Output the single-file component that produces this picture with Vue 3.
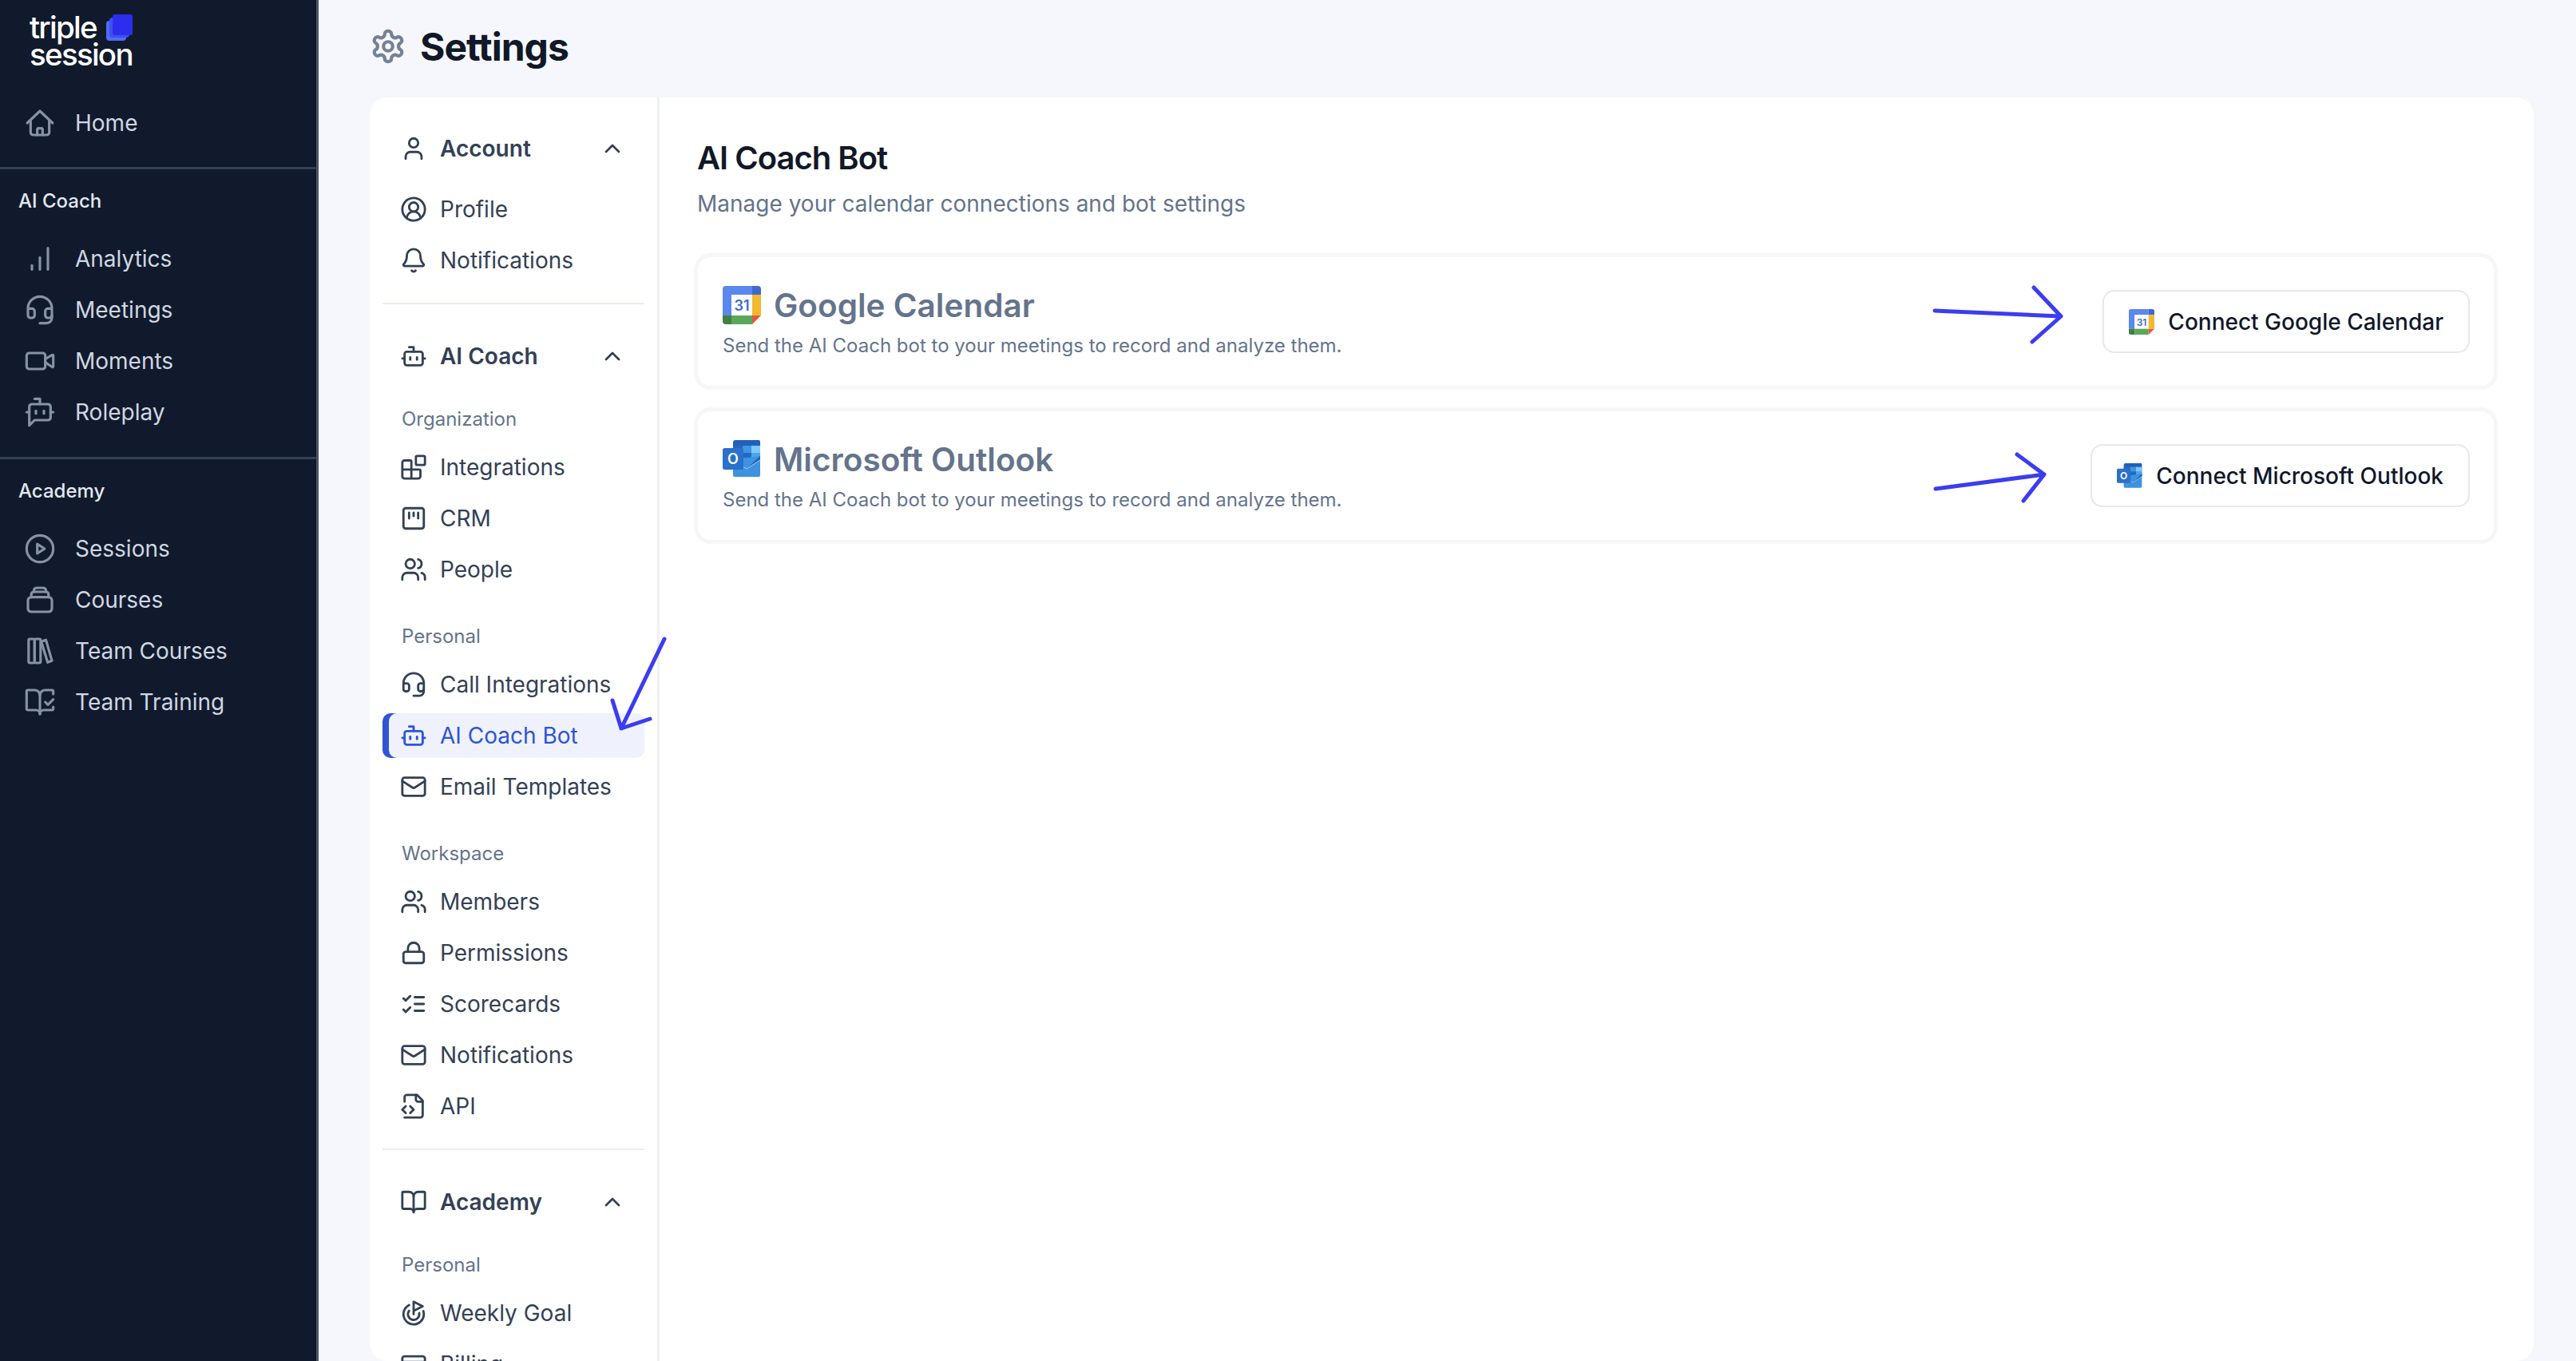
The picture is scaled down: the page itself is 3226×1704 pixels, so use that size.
<template>
  <div class="app-shell">
    <aside class="sidebar">
      <div class="logo">
        <div class="logo-line">
          <span>triple</span>
          <svg class="logo-mark" viewBox="0 0 33 33">
            <rect x="0" y="8" width="25" height="25" rx="4" fill="#4f6cf5" />
            <rect x="4" y="4" width="25" height="25" rx="4" fill="#3d50f2" />
            <rect x="8" y="0" width="25" height="26" rx="3" fill="#2d2df0" />
          </svg>
        </div>
        <div class="logo-line">session</div>
      </div>

      <div class="side-group home-group">
        <a v-for="item in homeNav" :key="item.label" class="side-item">
          <svg class="side-icon" viewBox="0 0 24 24" v-html="icons[item.icon]"></svg>
          <span>{{ item.label }}</span>
        </a>
      </div>

      <div class="side-group coach-group">
        <div class="side-title">AI Coach</div>
        <a v-for="item in coachNav" :key="item.label" class="side-item">
          <svg class="side-icon" viewBox="0 0 24 24" v-html="icons[item.icon]"></svg>
          <span>{{ item.label }}</span>
        </a>
      </div>

      <div class="side-group academy-group">
        <div class="side-title">Academy</div>
        <a v-for="item in academyNav" :key="item.label" class="side-item">
          <svg class="side-icon" viewBox="0 0 24 24" v-html="icons[item.icon]"></svg>
          <span>{{ item.label }}</span>
        </a>
      </div>
    </aside>

    <main class="main">
      <header class="page-header">
        <svg class="gear" viewBox="0 0 24 24" v-html="icons.settings"></svg>
        <h1>Settings</h1>
      </header>

      <div class="panel">
        <nav class="settings-nav">
          <section v-for="group in settingsNav" :key="group.title" class="nav-group">
            <div class="nav-head">
              <svg class="nav-icon" viewBox="0 0 24 24" v-html="icons[group.icon]"></svg>
              <span class="nav-head-label">{{ group.title }}</span>
              <svg class="chevron" viewBox="0 0 24 24" v-html="icons.chevron"></svg>
            </div>
            <div v-for="block in group.blocks" :key="block.label" class="nav-block">
              <div v-if="block.label" class="nav-label">{{ block.label }}</div>
              <div class="nav-items">
                <a
                  v-for="item in block.items"
                  :key="item.label"
                  :class="['nav-item', { active: item.active }]"
                >
                  <svg class="nav-icon" viewBox="0 0 24 24" v-html="icons[item.icon]"></svg>
                  <span>{{ item.label }}</span>
                </a>
              </div>
            </div>
          </section>
        </nav>

        <div class="content">
          <h2>AI Coach Bot</h2>
          <p class="content-desc">Manage your calendar connections and bot settings</p>

          <div class="cards">
            <div class="card">
              <div class="card-info">
                <div class="card-title">
                  <svg class="brand" viewBox="0 0 48 48" v-html="googleLogo"></svg>
                  <span>Google Calendar</span>
                </div>
                <p class="card-desc">Send the AI Coach bot to your meetings to record and analyze them.</p>
              </div>
              <button class="connect">
                <svg class="brand-small" viewBox="0 0 48 48" v-html="googleLogo"></svg>
                Connect Google Calendar
              </button>
            </div>

            <div class="card">
              <div class="card-info">
                <div class="card-title">
                  <svg class="brand" viewBox="0 0 48 48" v-html="outlookLogo"></svg>
                  <span>Microsoft Outlook</span>
                </div>
                <p class="card-desc">Send the AI Coach bot to your meetings to record and analyze them.</p>
              </div>
              <button class="connect">
                <svg class="brand-small" viewBox="0 0 48 48" v-html="outlookLogo"></svg>
                Connect Microsoft Outlook
              </button>
            </div>
          </div>
        </div>
      </div>
    </main>

    <!-- hand drawn arrows on top of the page -->
    <svg class="scribbles" viewBox="0 0 3226 1704">
      <path d="M2423 389 2581 396M2547 360 2581 396 2545 428" />
      <path d="M2424 612 2560 594M2526 569 2560 594 2534 627" />
      <path d="M832 800 778 912M767 877 778 912 814 900" />
    </svg>
  </div>
</template>

<script setup>
const icons = {
  home: '<path d="M2.5 12 12 3l9.5 9"/><path d="M5 10v9a2 2 0 0 0 2 2h10a2 2 0 0 0 2-2v-9"/><path d="M10 21v-4a1 1 0 0 1 1-1h2a1 1 0 0 1 1 1v4"/>',
  chart: '<path d="M6 20v-3"/><path d="M12 20v-9"/><path d="M18 20V4"/>',
  headset: '<path d="M3 11h3a2 2 0 0 1 2 2v3a2 2 0 0 1-2 2H5a2 2 0 0 1-2-2v-5Zm0 0a9 9 0 1 1 18 0m0 0v5a2 2 0 0 1-2 2h-1a2 2 0 0 1-2-2v-3a2 2 0 0 1 2-2h3Z"/><path d="M21 16v2a4 4 0 0 1-4 4h-5"/>',
  video: '<path d="m16 13 5.223 3.482a.5.5 0 0 0 .777-.416V7.87a.5.5 0 0 0-.752-.432L16 10.5"/><rect x="2" y="6" width="14" height="12" rx="2"/>',
  botMessage: '<path d="M12 6V2H8"/><path d="m8 18-4 4V8a2 2 0 0 1 2-2h12a2 2 0 0 1 2 2v8a2 2 0 0 1-2 2Z"/><path d="M2 12h2"/><path d="M9 11v2"/><path d="M15 11v2"/><path d="M20 12h2"/>',
  play: '<circle cx="12" cy="12" r="10"/><path d="M10 8.5v7l5.5-3.5z"/>',
  courses: '<rect x="3" y="10" width="18" height="11" rx="2.5"/><path d="M5.5 10V8a2 2 0 0 1 2-2h9a2 2 0 0 1 2 2v2"/><path d="M7.5 6V5a2 2 0 0 1 2-2h5a2 2 0 0 1 2 2v1"/>',
  books: '<rect x="3.5" y="3" width="4.5" height="18" rx="1"/><rect x="8" y="3" width="4.5" height="18" rx="1"/><path d="M13 5 16.5 3.7 21 19.3 17.8 20.6z"/>',
  bookCheck: '<path d="M12 21V7"/><path d="m16 12 2 2 4-4"/><path d="M22 6V4a1 1 0 0 0-1-1h-5a4 4 0 0 0-4 4 4 4 0 0 0-4-4H3a1 1 0 0 0-1 1v13a1 1 0 0 0 1 1h6a3 3 0 0 1 3 3 3 3 0 0 1 3-3h6a1 1 0 0 0 1-1v-1.3"/>',
  settings: '<path d="M12.22 2h-.44a2 2 0 0 0-2 2v.18a2 2 0 0 1-1 1.73l-.43.25a2 2 0 0 1-2 0l-.15-.08a2 2 0 0 0-2.73.73l-.22.38a2 2 0 0 0 .73 2.73l.15.1a2 2 0 0 1 1 1.72v.51a2 2 0 0 1-1 1.74l-.15.09a2 2 0 0 0-.73 2.73l.22.38a2 2 0 0 0 2.73.73l.15-.08a2 2 0 0 1 2 0l.43.25a2 2 0 0 1 1 1.73V20a2 2 0 0 0 2 2h.44a2 2 0 0 0 2-2v-.18a2 2 0 0 1 1-1.73l.43-.25a2 2 0 0 1 2 0l.15.08a2 2 0 0 0 2.73-.73l.22-.39a2 2 0 0 0-.73-2.73l-.15-.08a2 2 0 0 1-1-1.74v-.5a2 2 0 0 1 1-1.74l.15-.09a2 2 0 0 0 .73-2.73l-.22-.38a2 2 0 0 0-2.73-.73l-.15.08a2 2 0 0 1-2 0l-.43-.25a2 2 0 0 1-1-1.73V4a2 2 0 0 0-2-2z"/><circle cx="12" cy="12" r="3"/>',
  chevron: '<path d="m18 15-6-6-6 6"/>',
  user: '<path d="M19 21v-2a4 4 0 0 0-4-4H9a4 4 0 0 0-4 4v2"/><circle cx="12" cy="7" r="4"/>',
  profile: '<circle cx="12" cy="12" r="10"/><circle cx="12" cy="10" r="4"/><path d="M18 20a6 6 0 0 0-12 0"/>',
  bell: '<path d="M10.268 21a2 2 0 0 0 3.464 0"/><path d="M3.262 15.326A1 1 0 0 0 4 17h16a1 1 0 0 0 .74-1.673C19.41 13.956 18 12.499 18 8A6 6 0 0 0 6 8c0 4.499-1.411 5.956-2.738 7.326"/>',
  bot: '<path d="M12 8V4H8"/><rect x="4" y="8" width="16" height="12" rx="2"/><path d="M2 14h2"/><path d="M20 14h2"/><path d="M15 13v2"/><path d="M9 13v2"/>',
  blocks: '<path d="M10 22V7a1 1 0 0 0-1-1H4a2 2 0 0 0-2 2v12a2 2 0 0 0 2 2h12a2 2 0 0 0 2-2v-5a1 1 0 0 0-1-1H2"/><rect x="14" y="2" width="8" height="8" rx="1"/>',
  kanban: '<rect x="3" y="3" width="18" height="18" rx="2"/><path d="M8 7v5"/><path d="M12 7v3"/><path d="M16 7v5"/>',
  users: '<path d="M16 21v-2a4 4 0 0 0-4-4H6a4 4 0 0 0-4 4v2"/><circle cx="9" cy="7" r="4"/><path d="M22 21v-2a4 4 0 0 0-3-3.87"/><path d="M16 3.13a4 4 0 0 1 0 7.75"/>',
  mail: '<rect x="2" y="4" width="20" height="16" rx="2"/><path d="m22 7-8.97 5.7a1.94 1.94 0 0 1-2.06 0L2 7"/>',
  lock: '<rect x="3" y="11" width="18" height="10" rx="2"/><path d="M7 11V8a5 5 0 0 1 10 0v3"/>',
  checks: '<path d="m3 17 2 2 4-4"/><path d="m3 7 2 2 4-4"/><path d="M13 6h8"/><path d="M13 12h8"/><path d="M13 18h8"/>',
  fileCode: '<path d="M4 22h14a2 2 0 0 0 2-2V7l-5-5H6a2 2 0 0 0-2 2v4"/><path d="M14 2v4a2 2 0 0 0 2 2h4"/><path d="m5 12-3 3 3 3"/><path d="m9 18 3-3-3-3"/>',
  book: '<path d="M12 7v14"/><path d="M3 18a1 1 0 0 1-1-1V4a1 1 0 0 1 1-1h5a4 4 0 0 1 4 4 4 4 0 0 1 4-4h5a1 1 0 0 1 1 1v13a1 1 0 0 1-1 1h-6a3 3 0 0 0-3 3 3 3 0 0 0-3-3z"/>',
  goal: '<path d="M12 13V2l8 4-8 4"/><path d="M20.561 10.222a9 9 0 1 1-12.55-5.29"/><path d="M8.002 9.997a5 5 0 1 0 8.9 2.02"/>',
  card: '<rect x="2" y="5" width="20" height="14" rx="2"/><path d="M2 10h20"/>'
}

const googleLogo = `
  <path d="M4 0H37V11H11V37H0V4a4 4 0 0 1 4-4Z" fill="#5a88ec"/>
  <path d="M37 0h7a4 4 0 0 1 4 4v7H37Z" fill="#3f68cf"/>
  <rect x="11" y="11" width="26" height="26" fill="#fff"/>
  <rect x="37" y="11" width="11" height="26" fill="#f1b92e"/>
  <rect x="11" y="37" width="26" height="11" fill="#5aa75c"/>
  <path d="M0 37H11V48H4a4 4 0 0 1-4-4Z" fill="#3f7f42"/>
  <path d="M37 37H48L37 48Z" fill="#e4593c"/>
  <text x="24" y="31" text-anchor="middle" font-family="Inter, sans-serif" font-size="18" font-weight="600" fill="#3f68cf">31</text>
`

const outlookLogo = `
  <path d="M16 0H45a2 2 0 0 1 2 2V24H13V3a3 3 0 0 1 3-3Z" fill="#2160b8"/>
  <rect x="13" y="7" width="12" height="9" fill="#2568c4"/>
  <rect x="25" y="7" width="11" height="9" fill="#3f95e6"/>
  <rect x="36" y="7" width="11" height="9" fill="#7cc8fa"/>
  <rect x="25" y="16" width="11" height="9" fill="#2568c4"/>
  <rect x="36" y="16" width="11" height="9" fill="#4aa6ee"/>
  <path d="M13 24 47 20V44a2 2 0 0 1-2 2H15a2 2 0 0 1-2-2Z" fill="#3e93e0"/>
  <path d="M13 25 30 36 47 20V24L30 36Z" fill="#1f5db3"/>
  <path d="M13 26 30 36 47 25" fill="none" stroke="#bcdcf7" stroke-width=".8"/>
  <rect x="0" y="10" width="26" height="27" rx="2.5" fill="#2a70cc"/>
  <text x="13" y="30" text-anchor="middle" font-family="Inter, sans-serif" font-size="18" font-weight="600" fill="#fff">O</text>
`

const homeNav = [{ label: 'Home', icon: 'home' }]

const coachNav = [
  { label: 'Analytics', icon: 'chart' },
  { label: 'Meetings', icon: 'headset' },
  { label: 'Moments', icon: 'video' },
  { label: 'Roleplay', icon: 'botMessage' }
]

const academyNav = [
  { label: 'Sessions', icon: 'play' },
  { label: 'Courses', icon: 'courses' },
  { label: 'Team Courses', icon: 'books' },
  { label: 'Team Training', icon: 'bookCheck' }
]

const settingsNav = [
  {
    title: 'Account',
    icon: 'user',
    blocks: [
      {
        label: '',
        items: [
          { label: 'Profile', icon: 'profile' },
          { label: 'Notifications', icon: 'bell' }
        ]
      }
    ]
  },
  {
    title: 'AI Coach',
    icon: 'bot',
    blocks: [
      {
        label: 'Organization',
        items: [
          { label: 'Integrations', icon: 'blocks' },
          { label: 'CRM', icon: 'kanban' },
          { label: 'People', icon: 'users' }
        ]
      },
      {
        label: 'Personal',
        items: [
          { label: 'Call Integrations', icon: 'headset' },
          { label: 'AI Coach Bot', icon: 'bot', active: true },
          { label: 'Email Templates', icon: 'mail' }
        ]
      },
      {
        label: 'Workspace',
        items: [
          { label: 'Members', icon: 'users' },
          { label: 'Permissions', icon: 'lock' },
          { label: 'Scorecards', icon: 'checks' },
          { label: 'Notifications', icon: 'mail' },
          { label: 'API', icon: 'fileCode' }
        ]
      }
    ]
  },
  {
    title: 'Academy',
    icon: 'book',
    blocks: [
      {
        label: 'Personal',
        items: [
          { label: 'Weekly Goal', icon: 'goal' },
          { label: 'Billing', icon: 'card' }
        ]
      }
    ]
  }
]
</script>

<style scoped>
.app-shell {
  position: relative;
  display: flex;
  width: 3226px;
  height: 1704px;
  overflow: hidden;
  background: #f5f7fc;
  font-family: 'Inter', sans-serif;
  color: #0f172a;
}

.sidebar {
  width: 399px;
  flex-shrink: 0;
  background: #111a2c;
  border-right: 3px solid #465265;
  box-sizing: border-box;
}

.logo {
  height: 122px;
  padding: 17px 0 0 37px;
  box-sizing: border-box;
  color: #fff;
  font-size: 38.5px;
  font-weight: 500;
  letter-spacing: -0.045em;
  line-height: 34px;
}

.logo-line {
  display: flex;
  align-items: flex-start;
  gap: 12px;
  height: 34px;
}

.logo-mark {
  width: 33px;
  height: 33px;
  flex-shrink: 0;
  margin-top: 1px;
}

.side-group {
  border-bottom: 3px solid #334155;
  box-sizing: border-box;
}

.home-group {
  height: 90px;
}

.coach-group {
  padding-top: 19px;
  height: 363px;
}

.academy-group {
  padding-top: 19px;
  border-bottom: none;
}

.side-title {
  height: 40px;
  margin-bottom: 21px;
  padding-left: 23px;
  display: flex;
  align-items: center;
  color: #e2e8f0;
  font-size: 24px;
  font-weight: 500;
}

.side-item {
  height: 64px;
  padding-left: 30px;
  display: flex;
  align-items: center;
  gap: 24px;
  color: #cfd7e3;
  font-size: 28px;
}

.side-icon {
  width: 40px;
  height: 40px;
  flex-shrink: 0;
  fill: none;
  stroke: #8692a6;
  stroke-width: 1.9;
  stroke-linecap: round;
  stroke-linejoin: round;
}

.main {
  flex: 1;
  min-width: 0;
  padding: 0 53px 0 64px;
  display: flex;
  flex-direction: column;
}

.page-header {
  height: 122px;
  flex-shrink: 0;
  display: flex;
  align-items: center;
  gap: 17px;
  padding-bottom: 6px;
  box-sizing: border-box;
}

.gear {
  width: 46px;
  height: 46px;
  fill: none;
  stroke: #768294;
  stroke-width: 2.2;
  stroke-linecap: round;
  stroke-linejoin: round;
}

h1 {
  margin: 0;
  font-size: 48px;
  font-weight: 700;
  letter-spacing: -0.02em;
  color: #111827;
}

.panel {
  flex: 1;
  min-height: 0;
  display: flex;
  background: #fff;
  border-radius: 22px;
  overflow: hidden;
}

.settings-nav {
  width: 363px;
  flex-shrink: 0;
  padding: 36px 16px 0;
  box-sizing: border-box;
  border-right: 3px solid #eef0f4;
}

.nav-group {
  padding-bottom: 25px;
  margin-bottom: 37px;
  border-bottom: 2px solid #e9ecf1;
}

.nav-group:last-child {
  border-bottom: none;
}

.nav-head {
  height: 56px;
  padding: 0 24px 0 22px;
  display: flex;
  align-items: center;
  gap: 16px;
  color: #334155;
  font-size: 28px;
  font-weight: 600;
  margin-bottom: 20px;
}

.nav-head-label {
  flex: 1;
}

.chevron {
  width: 32px;
  height: 32px;
  fill: none;
  stroke: #334155;
  stroke-width: 2;
  stroke-linecap: round;
  stroke-linejoin: round;
}

.nav-label {
  height: 40px;
  padding-left: 24px;
  display: flex;
  align-items: center;
  margin-top: 30px;
  margin-bottom: 13px;
  color: #64748b;
  font-size: 24px;
}

.nav-block + .nav-block {
  margin-top: 35px;
}

.nav-items {
  display: flex;
  flex-direction: column;
  gap: 8px;
}

.nav-item {
  height: 56px;
  padding-left: 22px;
  display: flex;
  align-items: center;
  gap: 16px;
  border-radius: 10px;
  color: #334155;
  font-size: 28px;
}

.nav-item.active {
  background: #eff2fd;
  box-shadow: inset 8px 0 0 #2f55d4;
  color: #2f55d4;
}

.nav-icon {
  width: 34px;
  height: 34px;
  flex-shrink: 0;
  fill: none;
  stroke: currentColor;
  stroke-width: 2;
  stroke-linecap: round;
  stroke-linejoin: round;
}

.content {
  flex: 1;
  min-width: 0;
  padding: 48px 50px 0 47px;
}

h2 {
  margin: 0;
  font-size: 40px;
  line-height: 56px;
  font-weight: 600;
  letter-spacing: -0.025em;
  color: #111827;
}

.content-desc {
  margin: 11px 0 0;
  font-size: 28px;
  line-height: 36px;
  color: #64748b;
}

.cards {
  margin: 49px 0 0 1px;
  display: flex;
  flex-direction: column;
  gap: 32px;
}

.card {
  height: 161px;
  padding: 0 30px 0 31px;
  display: flex;
  align-items: center;
  justify-content: space-between;
  background: #fff;
  border-radius: 16px;
  box-shadow: 0 0 0 5px #f5f7f9;
}

.card-info {
  margin-top: 3px;
}

.card-title {
  height: 50px;
  display: flex;
  align-items: center;
  gap: 16px;
  color: #64748b;
  font-size: 40.5px;
  font-weight: 600;
}

.brand {
  width: 48px;
  height: 48px;
}

.card-desc {
  margin: 8px 0 0;
  font-size: 24px;
  line-height: 36px;
  color: #64748b;
}

.connect {
  height: 79px;
  padding: 0 31px;
  display: flex;
  align-items: center;
  gap: 17px;
  background: #fff;
  border: 2px solid #e5e8ef;
  border-radius: 15px;
  font-family: inherit;
  font-size: 28px;
  font-weight: 500;
  color: #0f172a;
}

.brand-small {
  width: 32px;
  height: 32px;
}

.scribbles {
  position: absolute;
  top: 0;
  left: 0;
  width: 3226px;
  height: 1704px;
  pointer-events: none;
  fill: none;
  stroke: #3c3cf0;
  stroke-width: 5;
  stroke-linecap: round;
  stroke-linejoin: round;
}
</style>

<style>
html,
body {
  margin: 0;
  overflow: hidden;
}
</style>
